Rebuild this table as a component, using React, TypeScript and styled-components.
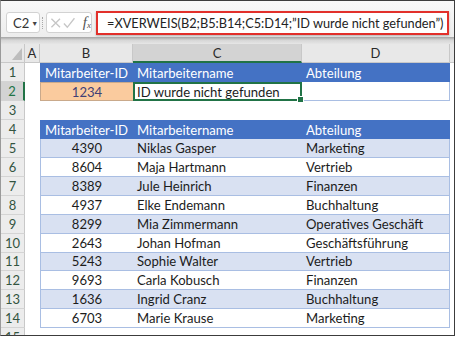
import React from 'react';
import styled, { createGlobalStyle, css } from 'styled-components';

const Global = createGlobalStyle`
  html, body { margin: 0; padding: 0; background: #fff; }
  body { font-family: Lato, "Liberation Sans", sans-serif; }
`;

const ROW_H = 18.93;
const COLS = { hdr: 24, a: 15, b: 93, c: 169, d: 148 };
const GREEN = '#217346';
const BLUE = '#4472C4';
const BAND = '#D9E1F2';
const LINE = '#A9BEE3';

const Frame = styled.div`
  width: 455px;
  height: 336px;
  box-sizing: border-box;
  border: 1px solid #3c3c3c;
  border-left-color: #9a9a9a;
  overflow: hidden;
  display: flex;
  flex-direction: column;
  background: #fff;
`;

const FormulaBar = styled.div`
  height: 36px;
  flex: none;
  display: flex;
  align-items: flex-start;
  padding-top: 10px;
  box-sizing: border-box;
  background: linear-gradient(#f8f8f8, #ededed);
`;

const NameBox = styled.div`
  margin-left: 5px;
  margin-top: 1px;
  width: 34px;
  height: 21px;
  box-sizing: border-box;
  background: #fff;
  border: 1px solid #d2d2d2;
  border-radius: 3px;
  display: flex;
  align-items: center;
  padding-left: 6px;
  font-size: 13px;
  color: #333;
`;

const Caret = styled.span`
  font-size: 7px;
  margin-left: 2px;
  color: #444;
`;

const Dots = styled.div`
  width: 1px;
  height: 12px;
  margin: 6px 2px 0 2px;
  border-left: 1px dotted #a8a8a8;
`;

const FxBox = styled.div`
  margin-top: 1px;
  width: 46px;
  height: 21px;
  box-sizing: border-box;
  background: #fff;
  border: 1px solid #d2d2d2;
  border-radius: 3px;
  display: flex;
  align-items: center;
  padding-left: 3px;
  gap: 2px;
`;

const Fx = styled.span`
  font-family: "Liberation Serif", serif;
  font-style: italic;
  font-size: 15px;
  color: #555;
  margin-left: 5px;
  sub { font-size: 9px; vertical-align: -1px; }
`;

const FormulaBox = styled.div`
  margin-left: 4px;
  width: 353px;
  height: 24px;
  box-sizing: border-box;
  border: 2px solid #e2302b;
  box-shadow: 0 1px 2px rgba(0, 0, 0, 0.25);
  background: #fff;
  display: flex;
  align-items: center;
  padding-left: 9px;
  font-size: 12.75px;
  color: #222;
  white-space: nowrap;
`;

const Shadow = styled.div`
  height: 7px;
  flex: none;
  background: linear-gradient(#a4a4a4, #d6d6d6 45%, #e6e6e6);
`;

const Row = styled.div<{ $h: number }>`
  height: ${p => p.$h}px;
  flex: none;
  display: flex;
`;

const Corner = styled.div`
  width: ${COLS.hdr}px;
  flex: none;
  background: #e8e8e8;
  border-right: 1px solid #c8c8c8;
  border-bottom: 1px solid #c8c8c8;
  box-sizing: border-box;
  display: flex;
  align-items: flex-end;
  justify-content: flex-end;
  padding: 0 2px 2px 0;
`;

const ColHeader = styled.div<{ $w: number; $active?: boolean }>`
  width: ${p => p.$w}px;
  flex: none;
  box-sizing: border-box;
  background: ${p => (p.$active ? '#d3d3d3' : '#e8e8e8')};
  border-right: 1px solid #c8c8c8;
  border-bottom: ${p => (p.$active ? `2px solid ${GREEN}` : '1px solid #c8c8c8')};
  color: #2a2a2a;
  font-size: 13px;
  display: flex;
  align-items: center;
  justify-content: center;
`;

const Filler = styled.div`
  flex: 1;
  background: #e8e8e8;
  border-bottom: 1px solid #c8c8c8;
`;

const RowHeader = styled.div<{ $active?: boolean }>`
  width: ${COLS.hdr}px;
  flex: none;
  box-sizing: border-box;
  background: ${p => (p.$active ? '#d3d3d3' : '#ececec')};
  border-right: ${p => (p.$active ? `2px solid ${GREEN}` : '1px solid #c8c8c8')};
  border-bottom: 1px solid #d4d4d4;
  color: ${p => (p.$active ? GREEN : '#33543f')};
  font-size: 13px;
  display: flex;
  align-items: center;
  justify-content: center;
`;

type CellProps = {
  $w: number;
  $align?: 'left' | 'center';
  $kind?: 'head' | 'band' | 'plain' | 'input' | 'empty' | 'selected';
  $left?: boolean;
  $right?: boolean;
  $bottom?: boolean;
};

const Cell = styled.div<CellProps>`
  position: relative;
  width: ${p => p.$w}px;
  flex: none;
  box-sizing: border-box;
  display: flex;
  align-items: center;
  justify-content: ${p => (p.$align === 'center' ? 'center' : 'flex-start')};
  padding-left: ${p => (p.$align === 'center' ? 0 : 4)}px;
  font-size: 13.1px;
  white-space: nowrap;
  color: #1c1c1c;
  background: #fff;
  ${p => p.$left && css`border-left: 1px solid ${LINE};`}
  ${p => p.$right && css`border-right: 1px solid ${LINE};`}
  ${p => p.$bottom && css`border-bottom: 1px solid ${LINE};`}
  ${p => p.$kind === 'head' && css`background: ${BLUE}; color: #fff; border-color: ${BLUE};`}
  ${p => p.$kind === 'band' && css`background: ${BAND};`}
  ${p => p.$kind === 'input' && css`background: #FACB9E; color: #3F3F76; border: 1px solid #c9a98b; border-right: none;`}
  ${p => p.$kind === 'selected' && css`border: 2px solid ${GREEN}; padding-left: 2px;`}
`;

const Handle = styled.span`
  position: absolute;
  right: -4px;
  bottom: -4px;
  width: 5px;
  height: 5px;
  background: ${GREEN};
  border: 1px solid #fff;
  z-index: 2;
`;

const Tail = styled.div`
  flex: 1;
`;

const Sheet = styled.div`
  flex: 1;
  display: flex;
  flex-direction: column;
  overflow: hidden;
`;

const data: [string, string, string][] = [
  ['4390', 'Niklas Gasper', 'Marketing'],
  ['8604', 'Maja Hartmann', 'Vertrieb'],
  ['8389', 'Jule Heinrich', 'Finanzen'],
  ['4937', 'Elke Endemann', 'Buchhaltung'],
  ['8299', 'Mia Zimmermann', 'Operatives Geschäft'],
  ['2643', 'Johan Hofman', 'Geschäftsführung'],
  ['5243', 'Sophie Walter', 'Vertrieb'],
  ['9693', 'Carla Kobusch', 'Finanzen'],
  ['1636', 'Ingrid Cranz', 'Buchhaltung'],
  ['6703', 'Marie Krause', 'Marketing'],
];

const Cross = () => (
  <svg width="12" height="12" viewBox="0 0 12 12">
    <path d="M1.5 1.5 L10.5 10.5 M10.5 1.5 L1.5 10.5" stroke="#c6c6c6" strokeWidth="1.4" fill="none" />
  </svg>
);
const Check = () => (
  <svg width="13" height="12" viewBox="0 0 13 12">
    <path d="M1 6.5 L4.5 10.5 L12 1" stroke="#c6c6c6" strokeWidth="1.4" fill="none" />
  </svg>
);

export default function App() {
  return (
    <>
      <Global />
      <Frame>
        <FormulaBar>
          <NameBox>
            C2<Caret>▼</Caret>
          </NameBox>
          <Dots />
          <FxBox>
            <Cross />
            <Check />
            <Fx>
              f<sub>x</sub>
            </Fx>
          </FxBox>
          <FormulaBox>=XVERWEIS(B2;B5:B14;C5:D14;”ID wurde nicht gefunden”)</FormulaBox>
        </FormulaBar>
        <Shadow />
        <Sheet>
          <Row $h={19.3}>
            <Corner>
              <svg width="10" height="12" viewBox="0 0 10 12">
                <polygon points="10,0 10,12 0,12" fill="#bdbdbd" />
              </svg>
            </Corner>
            <ColHeader $w={COLS.a}>A</ColHeader>
            <ColHeader $w={COLS.b}>B</ColHeader>
            <ColHeader $w={COLS.c} $active>C</ColHeader>
            <ColHeader $w={COLS.d}>D</ColHeader>
            <Filler />
          </Row>
          <Row $h={ROW_H}>
            <RowHeader>1</RowHeader>
            <Cell $w={COLS.a} />
            <Cell $w={COLS.b} $kind="head" $align="center">Mitarbeiter-ID</Cell>
            <Cell $w={COLS.c} $kind="head">Mitarbeitername</Cell>
            <Cell $w={COLS.d} $kind="head">Abteilung</Cell>
            <Tail />
          </Row>
          <Row $h={ROW_H}>
            <RowHeader $active>2</RowHeader>
            <Cell $w={COLS.a} />
            <Cell $w={COLS.b} $kind="input" $align="center">1234</Cell>
            <Cell $w={COLS.c} $kind="selected">
              ID wurde nicht gefunden
              <Handle />
            </Cell>
            <Cell $w={COLS.d} $right $bottom />
            <Tail />
          </Row>
          <Row $h={ROW_H}>
            <RowHeader>3</RowHeader>
            <Tail />
          </Row>
          <Row $h={ROW_H}>
            <RowHeader>4</RowHeader>
            <Cell $w={COLS.a} />
            <Cell $w={COLS.b} $kind="head" $align="center">Mitarbeiter-ID</Cell>
            <Cell $w={COLS.c} $kind="head">Mitarbeitername</Cell>
            <Cell $w={COLS.d} $kind="head">Abteilung</Cell>
            <Tail />
          </Row>
          {data.map(([id, name, dept], i) => {
            const kind = i % 2 === 0 ? 'band' : 'plain';
            return (
              <Row $h={ROW_H} key={id}>
                <RowHeader>{i + 5}</RowHeader>
                <Cell $w={COLS.a} />
                <Cell $w={COLS.b} $kind={kind} $align="center" $left $bottom>{id}</Cell>
                <Cell $w={COLS.c} $kind={kind} $bottom>{name}</Cell>
                <Cell $w={COLS.d} $kind={kind} $right $bottom>{dept}</Cell>
                <Tail />
              </Row>
            );
          })}
          <Row $h={ROW_H}>
            <RowHeader>15</RowHeader>
            <Tail />
          </Row>
        </Sheet>
      </Frame>
    </>
  );
}
